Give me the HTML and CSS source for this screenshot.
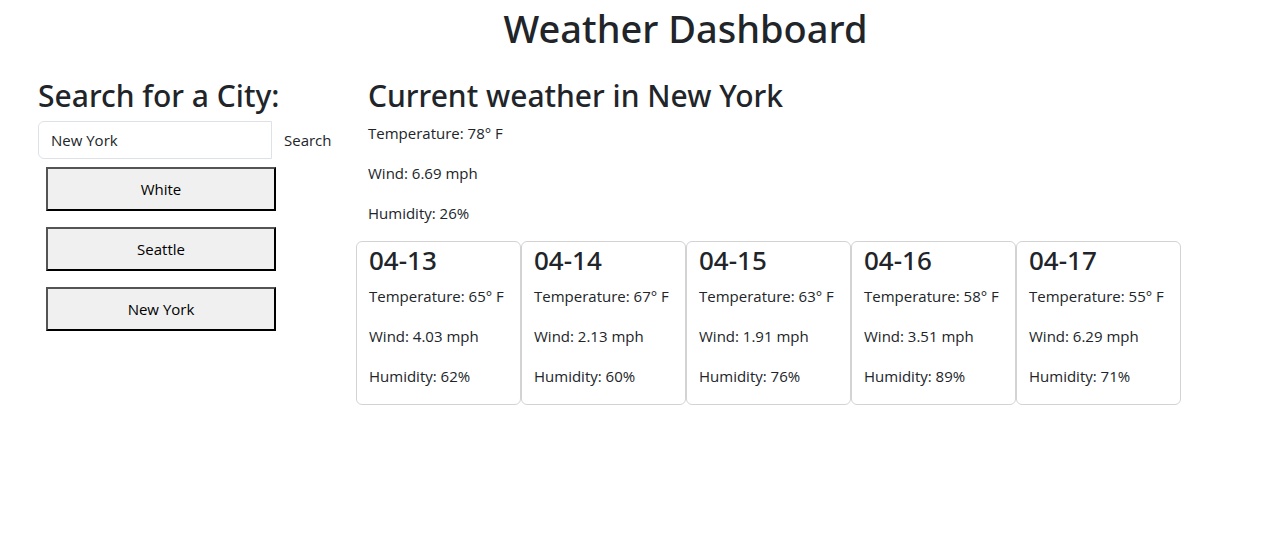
FILE: index.html
```html
<!DOCTYPE html>
<html lang="en">
<head>
<meta charset="utf-8">
<title>Weather Dashboard</title>
<link rel="stylesheet" href="styles.css">
</head>
<body>
<header class="page-header"><h1 class="page-title">Weather Dashboard</h1></header>
<main class="layout">
<aside class="sidebar">
<form class="search-form">
<h2><label for="city">Search for a City:</label></h2>
<div class="input-group">
<input class="city-input" id="city" type="text" value="New York">
<button class="search-button" type="button">Search</button>
</div>
</form>
<div class="history">
<button class="history-button" type="button">White</button>
<button class="history-button" type="button">Seattle</button>
<button class="history-button" type="button">New York</button>
</div>
</aside>
<section class="weather">
<div class="current">
<h2>Current weather in New York</h2>
<p>Temperature: 78° F</p>
<p>Wind: 6.69 mph</p>
<p>Humidity: 26%</p>
</div>
<div class="forecast">
<article class="card"><h3>04-13</h3><p>Temperature: 65° F</p><p>Wind: 4.03 mph</p><p>Humidity: 62%</p></article>
<article class="card"><h3>04-14</h3><p>Temperature: 67° F</p><p>Wind: 2.13 mph</p><p>Humidity: 60%</p></article>
<article class="card"><h3>04-15</h3><p>Temperature: 63° F</p><p>Wind: 1.91 mph</p><p>Humidity: 76%</p></article>
<article class="card"><h3>04-16</h3><p>Temperature: 58° F</p><p>Wind: 3.51 mph</p><p>Humidity: 89%</p></article>
<article class="card"><h3>04-17</h3><p>Temperature: 55° F</p><p>Wind: 6.29 mph</p><p>Humidity: 71%</p></article>
</div>
</section>
</main>
</body>
</html>
```
FILE: styles.css
```css
*, *::before, *::after { box-sizing: border-box; }
body {
  margin: 0;
  font-family: "Segoe UI", "Open Sans", "Noto Sans", sans-serif;
  font-size: 15px;
  font-weight: 400;
  line-height: 24px;
  color: #212529;
  background: #fff;
}
h1, h2, h3, p { margin: 0; }
h1, h2, h3 { font-weight: 500; margin-bottom: 6px; font-family: "Segoe UI", "Noto Sans", sans-serif; }
h2 { font-size: 30px; line-height: 38px; }
h3 { font-size: 26px; line-height: 36px; }
p { margin-bottom: 16px; }
.page-header { padding: 4px 0 14px 90px; text-align: center; }
.page-title { font-size: 38px; line-height: 48px; }
.layout { display: flex; padding: 5px 100px 0 38px; }
.sidebar { flex: 0 0 318px; }
.input-group { display: flex; }
.city-input {
  width: 234px;
  height: 38px;
  padding: 6px 12px;
  border: 1px solid #dee2e6;
  border-radius: 6px 0 0 6px;
  font: inherit;
  color: inherit;
  background: #fff;
}
.search-button {
  padding: 6px 12px;
  border: 0;
  font: inherit;
  color: inherit;
  background: transparent;
}
.history { display: grid; gap: 16px; width: 246px; padding: 8px; }
.history-button {
  height: 44px;
  border: 2px outset #000;
  font: inherit;
  color: #000;
  background: #f0f0f0;
}
.weather { flex: 1; min-width: 0; }
.current { padding: 0 12px; }
.forecast { display: grid; grid-template-columns: repeat(5, 1fr); }
.card {
  padding: 0 12px;
  border: 1px solid #d3d3d3;
  border-radius: 6px;
  white-space: nowrap;
}
```
